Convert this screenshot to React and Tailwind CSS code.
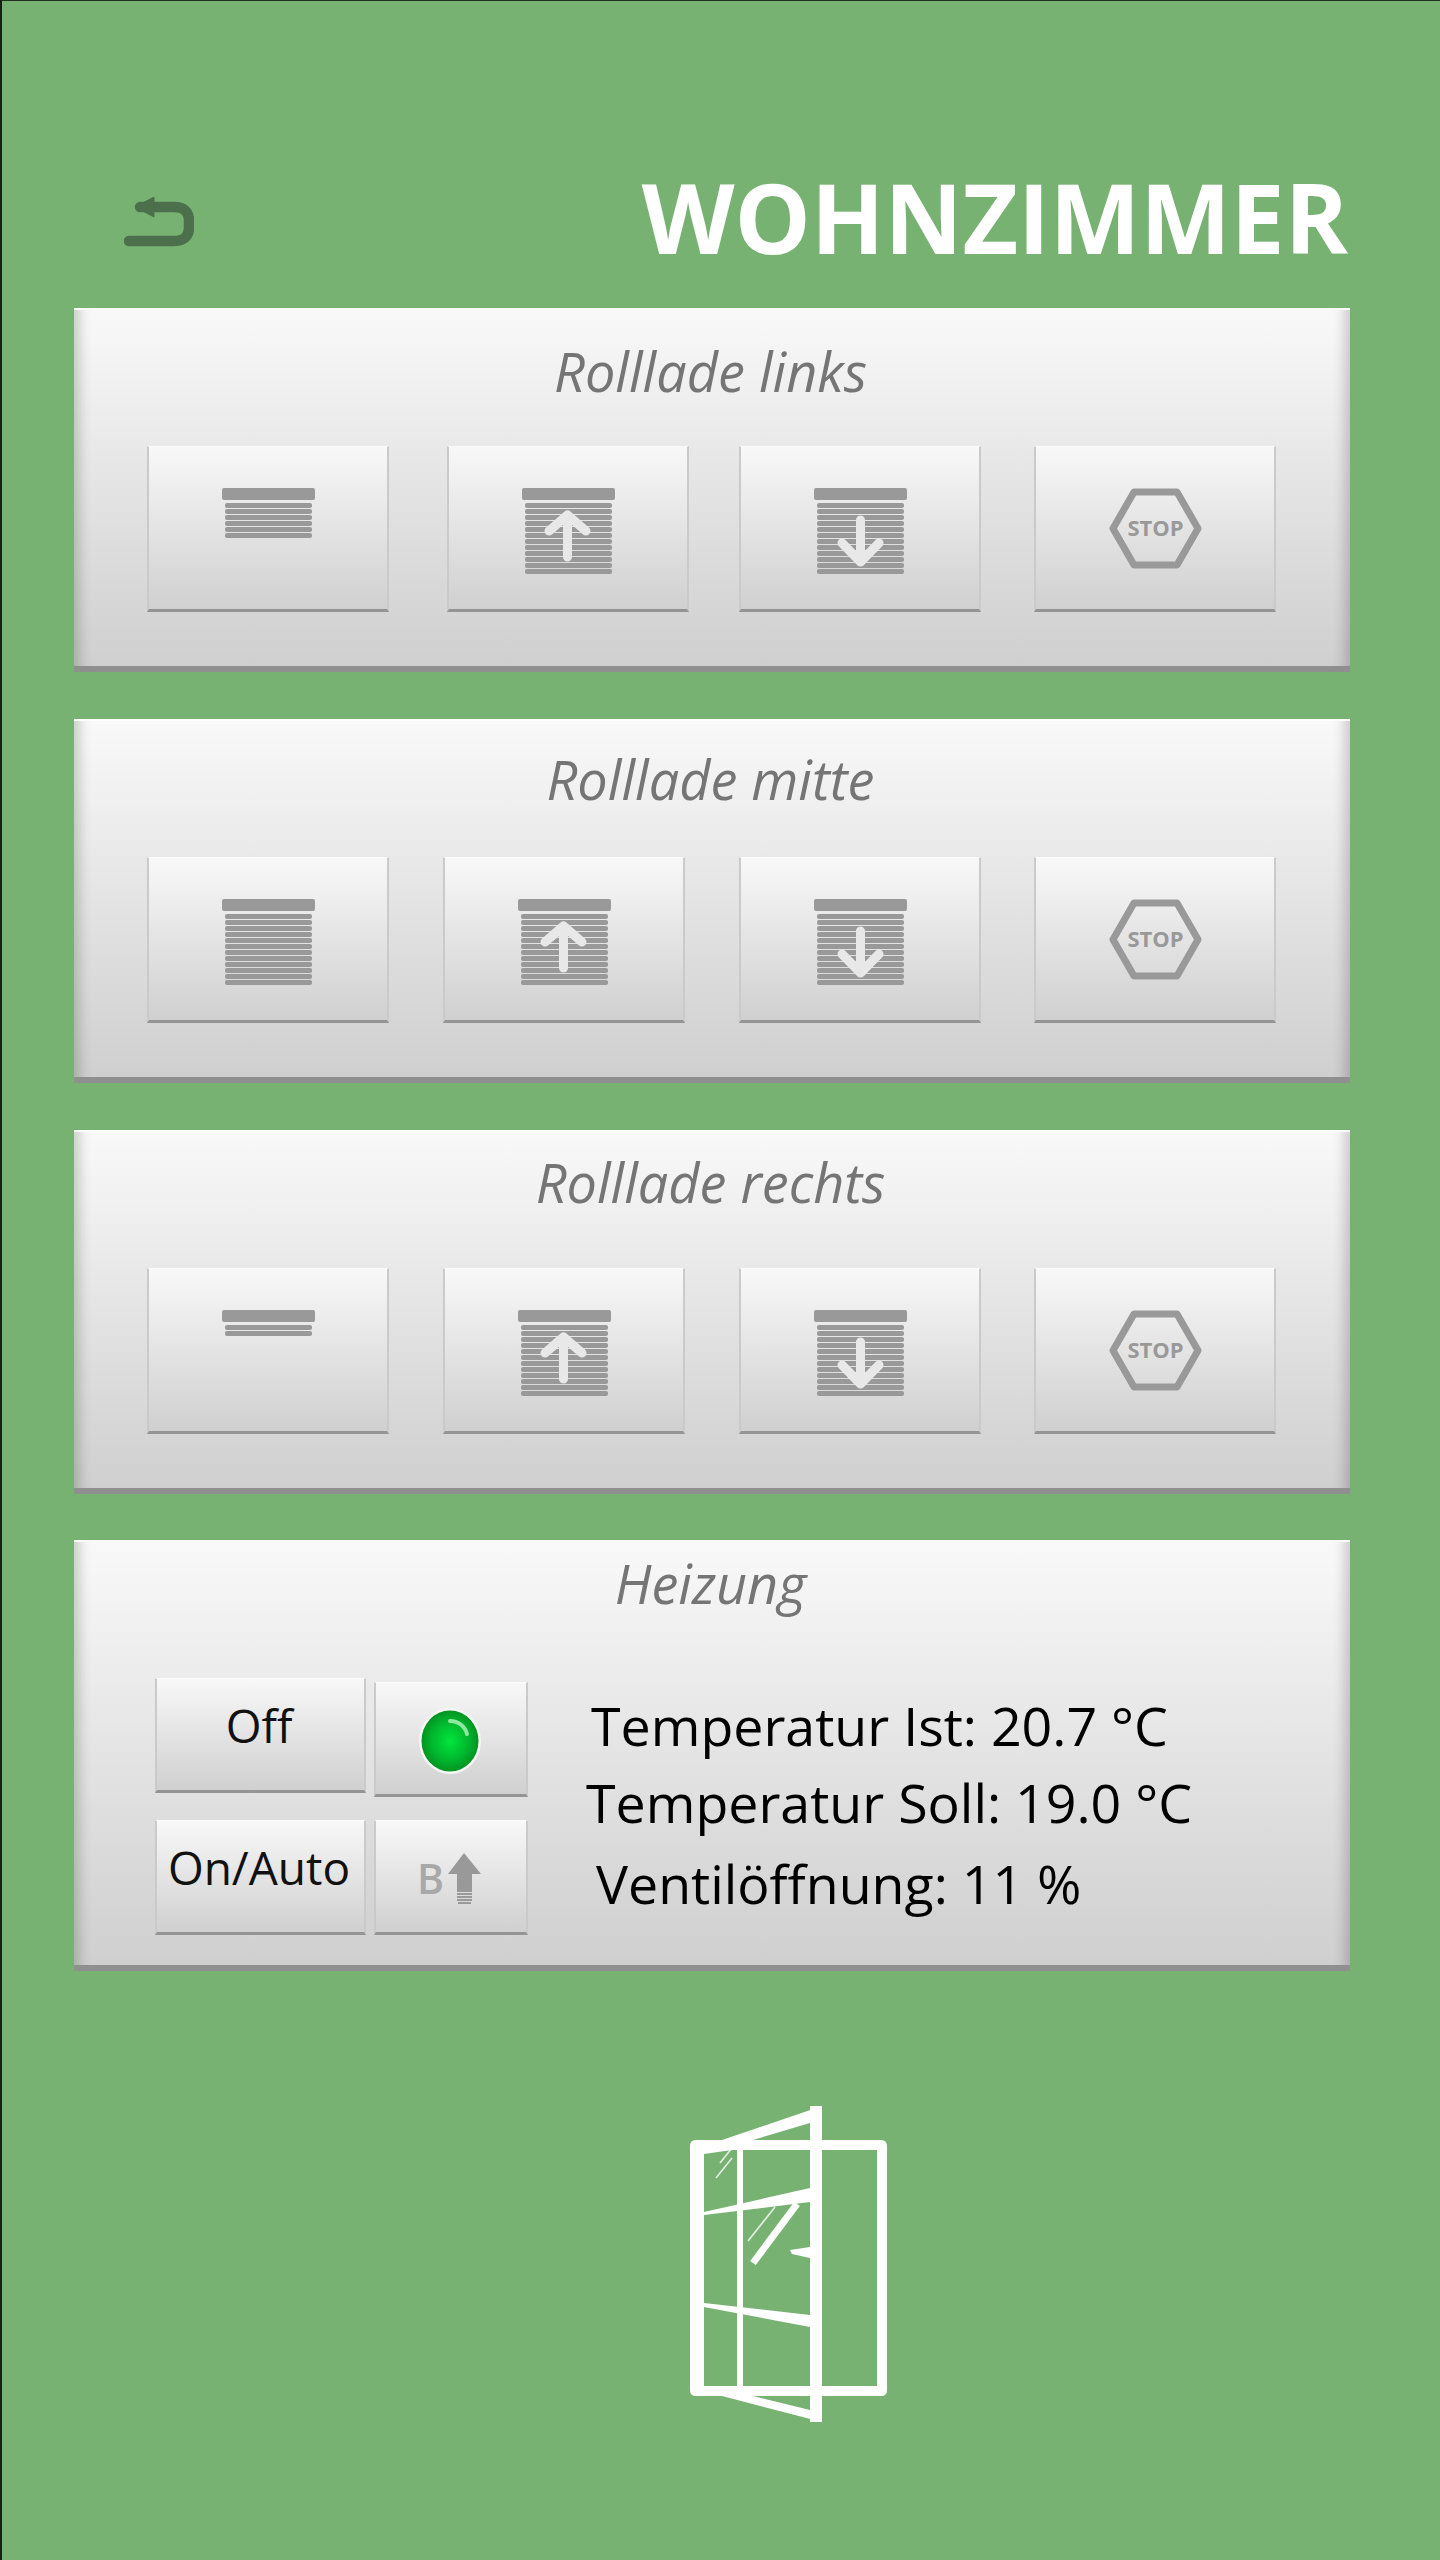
const Shutter = ({ slats, arrow }) => {
  const rows = Array.from({ length: slats }, (_, i) => i);
  return (
    <svg width="93" height="87" viewBox="0 0 93 87" className="block">
      <rect x="0" y="0" width="93" height="12" rx="2" fill="#999999" />
      {rows.map((i) => (
        <rect key={i} x="3" y={15 + i * 6} width="87" height="5" rx="2" fill="#999999" />
      ))}
      {arrow === "up" && (
        <path d="M45.5 69V27M27 43L45.5 27L64 43" fill="none" stroke="#e8e8e8" strokeWidth="9" strokeLinecap="round" strokeLinejoin="round" />
      )}
      {arrow === "down" && (
        <path d="M46.5 32V74M28 55L46.5 74L65 55" fill="none" stroke="#e8e8e8" strokeWidth="9" strokeLinecap="round" strokeLinejoin="round" />
      )}
    </svg>
  );
};

const Stop = () => (
  <svg width="93" height="81" viewBox="0 0 93 81" className="block">
    <polygon points="4,40.5 25,4 68,4 89,40.5 68,77 25,77" fill="none" stroke="#999999" strokeWidth="7" strokeLinejoin="round" />
    <text x="46.5" y="48" textAnchor="middle" fontFamily="'Open Sans', sans-serif" fontWeight="700" fontSize="22" fill="#999999">STOP</text>
  </svg>
);

const Btn = ({ className, children }) => (
  <div className={"box-border flex flex-col items-center border-x-2 border-t border-b-[3px] border-x-[#cacaca] border-t-[#fbfbfb] border-b-[#949494] bg-gradient-to-b from-[#f8f8f8] to-[#d0d0d0] " + className}>
    {children}
  </div>
);

const Panel = ({ className, children }) => (
  <section className={"relative box-border flex flex-col border-t-2 border-b-[6px] border-t-[#fdfdfd] border-b-[#8f8f8f] bg-gradient-to-b from-[#f9f9f9] to-[#cfcfcf] shadow-[inset_18px_0_12px_-12px_rgba(0,0,0,0.18),inset_-18px_0_12px_-12px_rgba(0,0,0,0.18)] " + className}>
    {children}
  </section>
);

const Title = ({ className, children }) => (
  <h2 className={"pr-[3px] text-center text-[54px] leading-[70px] italic font-normal text-[#757575] " + className}>{children}</h2>
);

const ShutterPanel = ({ title, titleClass, rowClass, slats, className }) => (
  <Panel className={"h-[364px] " + className}>
    <Title className={"h-[70px] " + titleClass}>{title}</Title>
    <div className={"absolute top-[136px] left-[73px] flex " + rowClass}>
      <Btn className="h-[166px] w-[242px] pt-[41px]"><Shutter slats={slats} /></Btn>
      <Btn className="h-[166px] w-[242px] pt-[41px]"><Shutter slats={12} arrow="up" /></Btn>
      <Btn className="ml-[var(--g2)] h-[166px] w-[242px] pt-[41px]"><Shutter slats={12} arrow="down" /></Btn>
      <Btn className="ml-[var(--g3)] h-[166px] w-[242px] pt-[41px]"><Stop /></Btn>
    </div>
  </Panel>
);

const Led = () => (
  <svg width="64" height="68" viewBox="0 0 64 68" className="block">
    <defs>
      <radialGradient id="led" cx="50%" cy="50%" r="55%">
        <stop offset="0%" stopColor="#00e63c" />
        <stop offset="60%" stopColor="#00b52d" />
        <stop offset="100%" stopColor="#008a1e" />
      </radialGradient>
    </defs>
    <ellipse cx="32" cy="34" rx="31" ry="33" fill="#f4f8f4" />
    <ellipse cx="32" cy="34" rx="28.5" ry="30.5" fill="url(#led)" />
    <path d="M32 14C40 14 47 19 49 27" fill="none" stroke="#8fe8a0" strokeWidth="4" strokeLinecap="round" />
  </svg>
);

const BoostIcon = () => (
  <svg width="66" height="52" viewBox="0 0 66 52" className="block">
    <text x="0" y="41" fontFamily="'Open Sans', sans-serif" fontWeight="600" fontSize="41" fill="#a8a8a8">B</text>
    <path d="M47 0L64 21H55V39H40V21H31Z" fill="#999999" />
    <path d="M40 41H55M40 44H55M40 47H55M41 50H54" stroke="#999999" strokeWidth="1.8" />
  </svg>
);

const WindowIcon = () => (
  <svg width="280" height="370" viewBox="0 0 280 370" className="block">
    <path fillRule="evenodd" d="M56 60H241Q247 60 247 66V310Q247 316 241 316H56Q50 316 50 310V66Q50 60 56 60ZM64 70V306H237V70Z" fill="#ffffff" />
    <rect x="170" y="26" width="12" height="316" fill="#ffffff" />
    <polygon points="82,60 182,26 182,60 170,60 170,43 113,60" fill="#ffffff" />
    <polygon points="82,316 113,316 170,330 170,316 182,316 182,342" fill="#ffffff" />
    <rect x="97" y="70" width="6" height="236" fill="#ffffff" />
    <polygon points="64,132 170,108 170,122 64,135" fill="#ffffff" />
    <polygon points="64,223 170,235 170,247 64,227" fill="#ffffff" />
    <polygon points="64,70 92,70 64,74" fill="#ffffff" />
    <polygon points="150,170 170,167 170,178 152,174" fill="#ffffff" />
    <path d="M113 183L157 124" stroke="#ffffff" strokeWidth="7" />
    <path d="M108 161L135 127M80 83L92 68M76 98L92 78" stroke="#ffffff" strokeWidth="1.6" opacity="0.8" />
  </svg>
);

const BackIcon = () => (
  <svg width="70" height="50" viewBox="0 0 70 50" className="block">
    <path d="M5 44H50Q65 44 65 30V24Q65 10 50 10H16" fill="none" stroke="#4b704b" strokeWidth="10.5" strokeLinecap="round" />
    <polygon points="11,10 30,0 30,20" fill="#4b704b" stroke="#4b704b" strokeWidth="1" strokeLinejoin="round" />
  </svg>
);

export default function App() {
  return (
    <div className="box-border h-[2560px] w-[1440px] overflow-hidden border-t border-l-2 border-t-[#20301f] border-l-[#16210f] bg-[#78b273] font-['Open_Sans',sans-serif]">
      <header className="flex h-[307px] items-start justify-between pr-[92px] pl-[122px]">
        <div className="pt-[196px]"><BackIcon /></div>
        <h1 className="pt-[149px] text-[96px] leading-[134px] font-bold text-white">WOHNZIMMER</h1>
      </header>
      <main className="flex w-[1276px] flex-col ml-[72px]">
        <ShutterPanel title="Rolllade links" titleClass="mt-[26px]" rowClass="gap-[58px] [--g2:-8px] [--g3:-5px]" slats={6} />
        <ShutterPanel className="mt-[47px]" title="Rolllade mitte" titleClass="mt-[23px]" rowClass="gap-[54px] [--g2:0px] [--g3:-1px]" slats={12} />
        <ShutterPanel className="mt-[47px]" title="Rolllade rechts" titleClass="mt-[15px]" rowClass="gap-[54px] [--g2:0px] [--g3:-1px]" slats={2} />
        <Panel className="mt-[46px] h-[431px]">
          <Title className="mt-[6px] h-[70px]">Heizung</Title>
          <div className="mt-[60px] flex pl-[81px]">
            <div className="flex flex-col">
              <Btn className="h-[115px] w-[211px] pt-[16px] pr-[3px]"><span className="text-[46px] leading-[60px] text-[#111111]">Off</span></Btn>
              <Btn className="mt-[27px] h-[115px] w-[211px] pt-[16px] pr-[3px]"><span className="text-[46px] leading-[60px] text-[#111111]">On/Auto</span></Btn>
            </div>
            <div className="ml-[8px] flex flex-col pt-[4px]">
              <Btn className="h-[115px] w-[154px] pt-[24px] pr-[2px]"><Led /></Btn>
              <Btn className="mt-[23px] h-[115px] w-[154px] pt-[32px] pr-[2px]"><BoostIcon /></Btn>
            </div>
            <div className="flex flex-col text-[53.7px] text-black">
              <p className="mt-[13px] ml-[63px] leading-[70px] whitespace-nowrap">Temperatur Ist: 20.7 °C</p>
              <p className="mt-[7px] ml-[58px] leading-[70px] whitespace-nowrap">Temperatur Soll: 19.0 °C</p>
              <p className="mt-[11px] ml-[68px] leading-[70px] whitespace-nowrap">Ventilöffnung: 11 %</p>
            </div>
          </div>
        </Panel>
        <div className="ml-[566px] mt-[109px]"><WindowIcon /></div>
      </main>
    </div>
  );
}
